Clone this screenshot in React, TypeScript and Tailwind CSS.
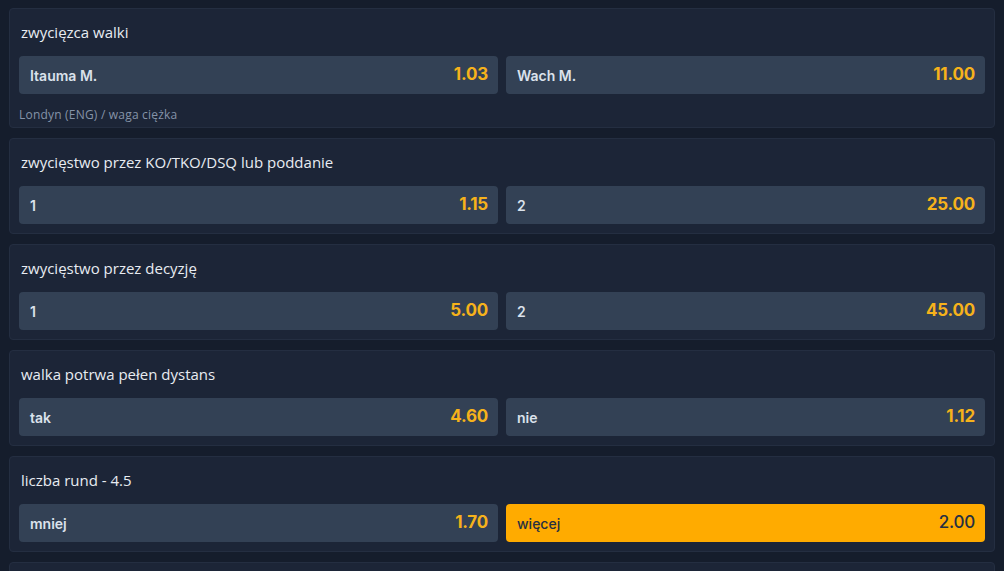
type Pick = { label: string; odds: string; active?: boolean };
type Market = { title: string; picks: Pick[]; note?: string };

const markets: Market[] = [
  {
    title: 'zwycięzca walki',
    picks: [
      { label: 'Itauma M.', odds: '1.03' },
      { label: 'Wach M.', odds: '11.00' },
    ],
    note: 'Londyn (ENG) / waga ciężka',
  },
  {
    title: 'zwycięstwo przez KO/TKO/DSQ lub poddanie',
    picks: [
      { label: '1', odds: '1.15' },
      { label: '2', odds: '25.00' },
    ],
  },
  {
    title: 'zwycięstwo przez decyzję',
    picks: [
      { label: '1', odds: '5.00' },
      { label: '2', odds: '45.00' },
    ],
  },
  {
    title: 'walka potrwa pełen dystans',
    picks: [
      { label: 'tak', odds: '4.60' },
      { label: 'nie', odds: '1.12' },
    ],
  },
  {
    title: 'liczba rund - 4.5',
    picks: [
      { label: 'mniej', odds: '1.70' },
      { label: 'więcej', odds: '2.00', active: true },
    ],
  },
];

const titleFont = { fontFamily: '"Open Sans", "DejaVu Sans", sans-serif' };

// Single odds button
const OddsButton = ({ pick }: { pick: Pick }) => (
  <button
    className={
      pick.active
        ? 'flex-1 h-[38px] rounded-[4px] bg-[#ffab00] flex items-center justify-between pl-[11px] pr-[10px] text-[#263042]'
        : 'flex-1 h-[38px] rounded-[4px] bg-[#334155] flex items-center justify-between pl-[11px] pr-[10px] text-[#dbe2ec]'
    }
    style={{ fontFamily: 'Inter, "Liberation Sans", sans-serif' }}
  >
    <span className={pick.active ? 'text-[14px] font-medium' : 'text-[14px] font-semibold'}>
      {pick.label}
    </span>
    <span
      className={
        pick.active
          ? 'text-[17px] font-medium tracking-[-0.2px]'
          : 'text-[17px] font-bold text-[#f6b21b] tracking-[-0.2px]'
      }
    >
      {pick.odds}
    </span>
  </button>
);

const MarketCard = ({ market }: { market: Market }) => (
  <div
    className={
      market.note
        ? 'shrink-0 bg-[#1c2537] border border-[#242e41] rounded-[4px] px-[9px] pt-[13px] pb-[4px]'
        : 'shrink-0 bg-[#1c2537] border border-[#242e41] rounded-[4px] px-[9px] pt-[13px] pb-[9px]'
    }
  >
    <div className="h-[20px] leading-[20px] text-[15px] text-[#e8ecf2] pl-[2px] mb-[14px]" style={titleFont}>
      {market.title}
    </div>
    <div className="flex gap-[8px]">
      {market.picks.map((p) => (
        <OddsButton key={p.label} pick={p} />
      ))}
    </div>
    {market.note && (
      <div className="mt-[13px] leading-[16px] text-[12px] tracking-[0.2px] text-[#8593a8]" style={titleFont}>
        {market.note}
      </div>
    )}
  </div>
);

export default function App() {
  return (
    <div className="w-[1004px] h-[571px] overflow-hidden bg-[#151d2c] px-[9px] pt-[8px] flex flex-col gap-[10px]">
      {markets.map((m) => (
        <MarketCard key={m.title} market={m} />
      ))}
      {/* next market, only its top edge is in view */}
      <div className="shrink-0 h-[96px] bg-[#1c2537] border border-[#242e41] rounded-[4px]" />
    </div>
  );
}
